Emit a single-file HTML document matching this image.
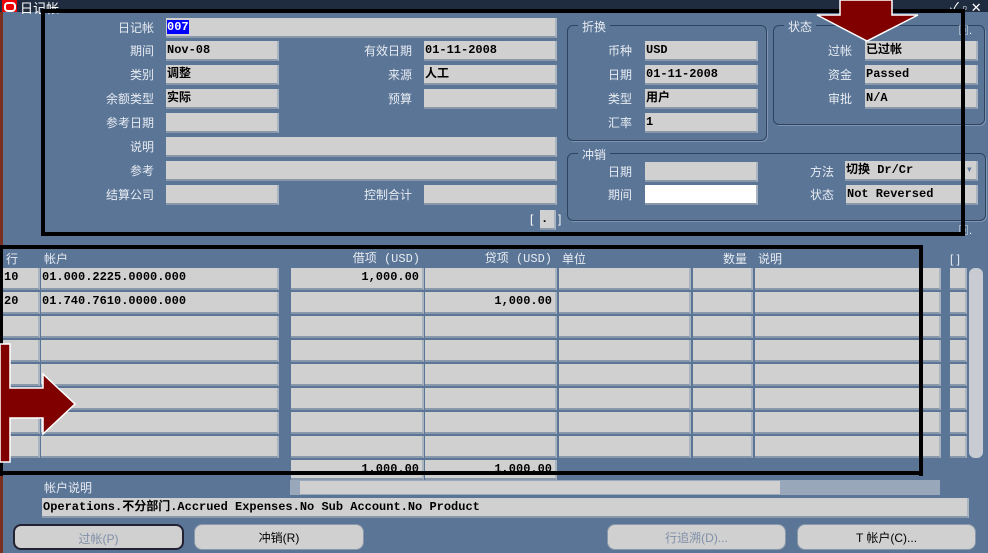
<!DOCTYPE html><html><head><meta charset="utf-8"><style>
body{margin:0;width:988px;height:553px;overflow:hidden;background:#5a7596;position:relative;font-family:"Liberation Sans","Noto Sans CJK SC",sans-serif;font-size:12px}
.a{position:absolute}
.f{position:absolute;background:#d0d0d0;height:20px;border-right:2px solid #aab4c0;border-bottom:2px solid #8a98ab;box-sizing:border-box;font-family:"Liberation Mono","Noto Sans CJK SC",monospace;font-size:12px;line-height:18px;padding-left:1px;color:#000;font-weight:bold}
.l{position:absolute;color:#e8ecf2;text-align:right;font-size:12px;line-height:20px}
.g{position:absolute;border:1px solid #2e4360;border-radius:6px;box-shadow:1px 1px 0 #7f95b3}
.gt{position:absolute;background:#5a7596;color:#e8ecf2;padding:0 4px;font-size:12px}
.bk{position:absolute;background:#000}
.btn{position:absolute;background:#d0d0d0;border-radius:8px;height:26px;top:524px;text-align:center;line-height:26px;font-size:12px;border:1px solid #8a98ab;box-sizing:border-box}
</style></head><body>
<div class="a" style="left:0;top:0;width:988px;height:12px;background:#1f2c40"></div>
<div class="a" style="left:2px;top:0;width:15px;height:12px;background:#e00"></div>
<div class="a" style="left:4px;top:2px;width:8px;height:6px;border:2px solid #fff;border-radius:4px"></div>
<div class="a" style="left:20px;top:-2px;color:#fff;font-size:13px">日记帐</div>
<div class="a" style="left:950px;top:-3px;color:#fff;font-size:13px">✓ ▫ ✕</div>
<div class="a" style="left:0;top:12px;width:3px;height:541px;background:#7a3020"></div>

<div class="l" style="left:60px;top:18px;width:94px">日记帐</div>
<div class="f" style="left:166px;top:18px;width:391px"><span style="background:#00f;color:#fff">007</span></div>
<div class="l" style="left:60px;top:41px;width:94px">期间</div><div class="f" style="left:166px;top:41px;width:113px">Nov-08</div>
<div class="l" style="left:60px;top:65px;width:94px">类别</div><div class="f" style="left:166px;top:65px;width:113px">调整</div>
<div class="l" style="left:60px;top:89px;width:94px">余额类型</div><div class="f" style="left:166px;top:89px;width:113px">实际</div>
<div class="l" style="left:60px;top:113px;width:94px">参考日期</div><div class="f" style="left:166px;top:113px;width:113px"></div>
<div class="l" style="left:60px;top:137px;width:94px">说明</div><div class="f" style="left:166px;top:137px;width:391px"></div>
<div class="l" style="left:60px;top:161px;width:94px">参考</div><div class="f" style="left:166px;top:161px;width:391px"></div>
<div class="l" style="left:60px;top:185px;width:94px">结算公司</div><div class="f" style="left:166px;top:185px;width:113px"></div>
<div class="l" style="left:320px;top:41px;width:92px">有效日期</div><div class="f" style="left:424px;top:41px;width:133px">01-11-2008</div>
<div class="l" style="left:320px;top:65px;width:92px">来源</div><div class="f" style="left:424px;top:65px;width:133px">人工</div>
<div class="l" style="left:320px;top:89px;width:92px">预算</div><div class="f" style="left:424px;top:89px;width:133px"></div>
<div class="l" style="left:320px;top:185px;width:92px">控制合计</div><div class="f" style="left:424px;top:185px;width:133px"></div>
<div class="a" style="left:530px;top:212px;color:#fff">[</div><div class="f" style="left:540px;top:210px;width:16px">.</div><div class="a" style="left:558px;top:212px;color:#fff">]</div>

<div class="g" style="left:567px;top:25px;width:198px;height:114px"></div><div class="gt" style="left:578px;top:18px">折换</div>
<div class="l" style="left:580px;top:41px;width:52px">币种</div><div class="f" style="left:645px;top:41px;width:113px">USD</div>
<div class="l" style="left:580px;top:65px;width:52px">日期</div><div class="f" style="left:645px;top:65px;width:113px">01-11-2008</div>
<div class="l" style="left:580px;top:89px;width:52px">类型</div><div class="f" style="left:645px;top:89px;width:113px">用户</div>
<div class="l" style="left:580px;top:113px;width:52px">汇率</div><div class="f" style="left:645px;top:113px;width:113px">1</div>
<div class="g" style="left:773px;top:25px;width:210px;height:98px"></div><div class="gt" style="left:784px;top:18px">状态</div>
<div class="l" style="left:790px;top:41px;width:62px">过帐</div><div class="f" style="left:865px;top:41px;width:113px">已过帐</div>
<div class="l" style="left:790px;top:65px;width:62px">资金</div><div class="f" style="left:865px;top:65px;width:113px">Passed</div>
<div class="l" style="left:790px;top:89px;width:62px">审批</div><div class="f" style="left:865px;top:89px;width:113px">N/A</div>
<div class="g" style="left:567px;top:153px;width:417px;height:66px"></div><div class="gt" style="left:578px;top:146px">冲销</div>
<div class="l" style="left:580px;top:162px;width:52px">日期</div><div class="f" style="left:645px;top:162px;width:113px"></div>
<div class="l" style="left:580px;top:185px;width:52px">期间</div><div class="f" style="left:645px;top:185px;width:113px;background:#fff"></div>
<div class="l" style="left:780px;top:162px;width:54px">方法</div><div class="f" style="left:845px;top:161px;width:133px">切换 Dr/Cr<span style="float:right;color:#6a7f9c;padding-right:3px">▾</span></div>
<div class="l" style="left:780px;top:185px;width:54px">状态</div><div class="f" style="left:846px;top:185px;width:132px">Not Reversed</div>
<div class="a" style="left:958px;top:22px;color:#fff;font-size:11px">▣.</div>
<div class="a" style="left:958px;top:222px;color:#fff;font-size:11px">▣.</div>

<div class="l" style="left:6px;top:249px;text-align:left">行</div>
<div class="l" style="left:44px;top:249px;text-align:left">帐户</div>
<div class="l" style="left:300px;top:249px;width:120px;font-family:'Liberation Mono','Noto Sans CJK SC',monospace">借项 (USD)</div>
<div class="l" style="left:430px;top:249px;width:122px;font-family:'Liberation Mono','Noto Sans CJK SC',monospace">贷项 (USD)</div>
<div class="l" style="left:562px;top:249px;text-align:left">单位</div>
<div class="l" style="left:700px;top:249px;width:47px">数量</div>
<div class="l" style="left:758px;top:249px;text-align:left">说明</div>
<div class="l" style="left:950px;top:249px;text-align:left">[ ]</div>
<div id="rows"></div>
<div class="f" style="left:291px;top:460px;width:133px;text-align:right;padding-right:3px">1,000.00</div>
<div class="f" style="left:425px;top:460px;width:132px;text-align:right;padding-right:3px">1,000.00</div>
<div class="a" style="left:969px;top:268px;width:14px;height:190px;background:#c8ccd2;border-radius:6px"></div>
<div class="a" style="left:290px;top:480px;width:650px;height:15px;background:#98a8ba"></div>
<div class="a" style="left:300px;top:481px;width:480px;height:13px;background:#d0d0d0"></div>
<div class="l" style="left:44px;top:478px;text-align:left">帐户说明</div>
<div class="f" style="left:42px;top:498px;width:927px">Operations.不分部门.Accrued Expenses.No Sub Account.No Product</div>
<div class="btn" style="left:13px;width:171px;color:#8090a8;border:2px solid #223">过帐(P)</div>
<div class="btn" style="left:194px;width:170px">冲销(R)</div>
<div class="btn" style="left:607px;width:179px;color:#8090a8">行追溯(D)...</div>
<div class="btn" style="left:797px;width:179px">T 帐户(C)...</div>

<div class="bk" style="left:41px;top:9px;width:924px;height:4px"></div>
<div class="bk" style="left:41px;top:9px;width:4px;height:227px"></div>
<div class="bk" style="left:961px;top:9px;width:4px;height:227px"></div>
<div class="bk" style="left:41px;top:232px;width:924px;height:4px"></div>
<div class="bk" style="left:0;top:245px;width:923px;height:4px"></div>
<div class="bk" style="left:0;top:245px;width:3px;height:231px"></div>
<div class="bk" style="left:919px;top:245px;width:4px;height:231px"></div>
<div class="bk" style="left:0;top:471px;width:923px;height:4px"></div>
<svg class="a" style="left:0;top:0" width="988" height="553"><polygon points="840,0 892,0 892,15 918,15 867,41 817,15 840,15" fill="#800000" stroke="#fff" stroke-width="1.5"/><polygon points="0,344 10,344 10,388 43,388 43,374 75,404 43,434 43,418 10,418 10,462 0,462" fill="#800000" stroke="#fff" stroke-width="1.5"/></svg>
<script>
var cols=[[3,37],[41,238],[291,133],[425,132],[559,132],[693,60],[755,186],[950,17]];
var data=[["10","01.000.2225.0000.000","1,000.00",""],["20","01.740.7610.0000.000","","1,000.00"]];
var h="";
for(var r=0;r<8;r++){var y=268+r*24;for(var c=0;c<cols.length;c++){var t="";var al="";if(r<2){if(c<2)t=data[r][c];if(c==2||c==3){t=data[r][c];al="text-align:right;padding-right:3px;"}}
h+='<div class="f" style="'+al+'left:'+cols[c][0]+'px;top:'+y+'px;width:'+cols[c][1]+'px;height:22px">'+t+'</div>';}}
document.getElementById("rows").innerHTML=h;
</script>
</body></html>
